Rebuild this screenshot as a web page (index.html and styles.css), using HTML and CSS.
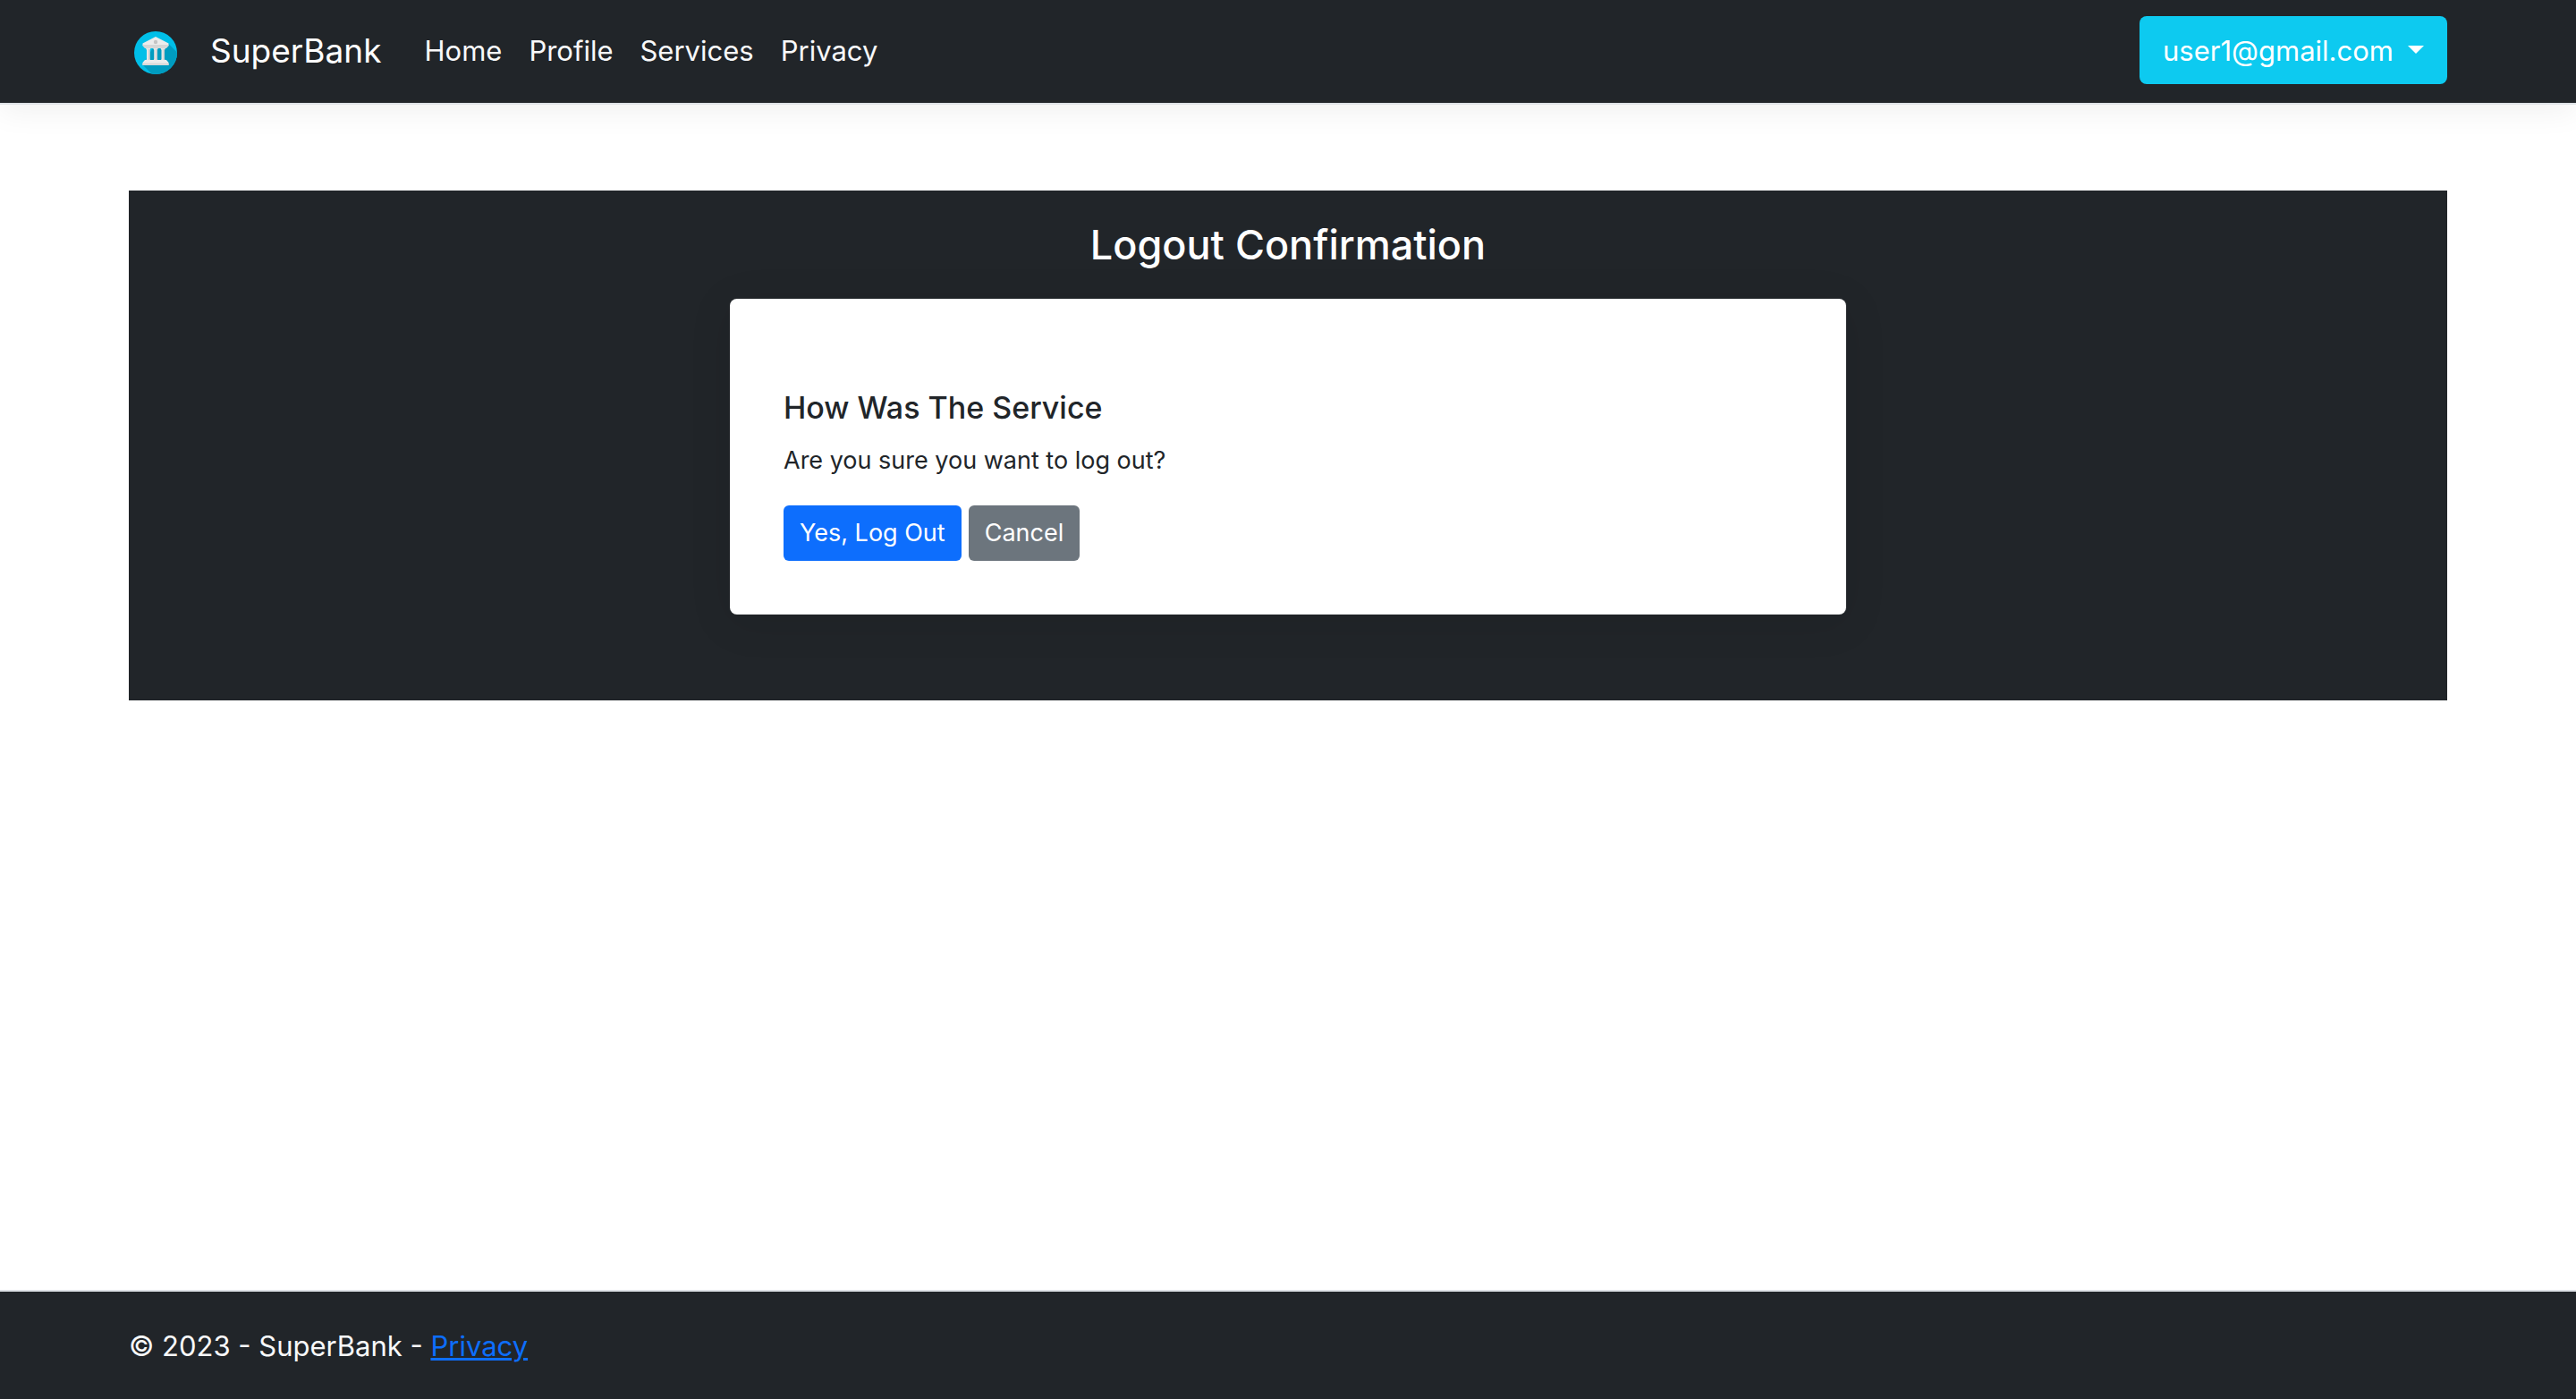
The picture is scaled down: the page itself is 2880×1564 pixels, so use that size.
FILE: index.html
```html
<!DOCTYPE html>
<html lang="en">
<head>
  <meta charset="utf-8">
  <meta name="viewport" content="width=device-width, initial-scale=1">
  <title>Logout Confirmation - SuperBank</title>
  <link rel="stylesheet" href="styles.css">
</head>
<body>
  <header class="navbar">
    <div class="container navbar-inner">
      <a class="brand" href="#">
        <svg class="brand-logo" viewBox="0 0 48 48" aria-hidden="true">
          <defs>
            <clipPath id="disc"><circle cx="24" cy="24" r="24"/></clipPath>
          </defs>
          <g clip-path="url(#disc)">
            <rect width="48" height="48" fill="#00bfe8"/>
            <path d="M38.500 14L60 35.500V60H32L9.500 37.500L20 20Z" fill="#009cc0"/>
          </g>
          <path d="M24 6L38.500 13.500V16L36 18.500H12L9.500 16V13.500Z" fill="#ececec"/>
          <path d="M9.500 15h29v1L36 19H12l-2.500-3z" fill="#d6d6d6"/>
          <circle cx="24" cy="12" r="2.200" fill="#c4c4c4"/>
          <path d="M13 19h5.500l-1 2v10l1 2H13l1-2V21zM21.250 19h5.500l-1 2v10l1 2h-5.500l1-2V21zM29.500 19H35l-1 2v10l1 2h-5.500l1-2V21z" fill="#e6e6e6"/>
          <path d="M16 20h1.500v12H16zM24.250 20h1.500v12h-1.500zM32.500 20H34v12h-1.500z" fill="#cfcfcf"/>
          <path d="M12 32h24l2.500 3v3h-29v-3z" fill="#ececec"/>
          <path d="M9.500 35.500h29V38h-29z" fill="#d9d9d9"/>
        </svg>
        <span>SuperBank</span>
      </a>
      <nav class="nav-links" aria-label="Main">
        <a href="#">Home</a>
        <a href="#">Profile</a>
        <a href="#">Services</a>
        <a href="#">Privacy</a>
      </nav>
      <button class="btn btn-info" type="button" aria-haspopup="true">user1@gmail.com<span class="caret"></span></button>
    </div>
  </header>

  <main class="container page">
    <section class="panel">
      <h1 class="panel-title">Logout Confirmation</h1>
      <div class="panel-column">
        <form class="card">
          <h2 class="card-title">How Was The Service</h2>
          <p class="card-text">Are you sure you want to log out?</p>
          <div class="actions">
            <button class="btn btn-primary" type="submit">Yes, Log Out</button>
            <a class="btn btn-secondary" href="#">Cancel</a>
          </div>
        </form>
      </div>
    </section>
  </main>

  <footer class="footer">
    <div class="container">© 2023 - SuperBank - <a href="#">Privacy</a></div>
  </footer>
</body>
</html>
```
FILE: styles.css
```css
* {
  box-sizing: border-box;
}

body {
  margin: 0;
  min-height: 100vh;
  display: flex;
  flex-direction: column;
  background: #fff;
  color: #212529;
  font-family: Inter, "Liberation Sans", sans-serif;
  font-size: 27px;
  line-height: 42px;
}

h1,
h2,
p {
  margin: 0;
}

.container {
  width: 90%;
  margin: 0 auto;
}

.navbar {
  background: #212529;
  border-bottom: 2px solid #dee2e6;
  box-shadow: 0 8px 32px rgba(0, 0, 0, 0.06);
}

.navbar-inner {
  display: flex;
  align-items: center;
  padding: 18px 0 21px;
}

.brand {
  display: flex;
  align-items: center;
  gap: 37px;
  margin-right: 48px;
  padding: 2px 0 0 6px;
  color: #fff;
  font-size: 37px;
  text-decoration: none;
}

.brand-logo {
  width: 48px;
  height: 48px;
  margin-top: 4px;
}

.nav-links {
  display: flex;
  gap: 30px;
  margin-right: auto;
  padding-top: 2px;
  font-size: 31px;
}

.nav-links a {
  color: #f8f9fa;
  text-decoration: none;
}

.btn {
  display: inline-flex;
  align-items: center;
  padding: 10px 18px;
  border: 0;
  border-radius: 6px;
  color: #fff;
  font: inherit;
  text-decoration: none;
  cursor: pointer;
}

.btn-info {
  padding: 18px 26px 16px;
  border-radius: 8px;
  background: #0dcaf0;
  font-size: 31px;
}

.btn-primary {
  background: #0d6efd;
}

.btn-secondary {
  background: #6c757d;
}

.caret {
  margin: 0 0 4px 16px;
  border-top: 9px solid;
  border-right: 9px solid transparent;
  border-left: 9px solid transparent;
}

.page {
  flex: 1;
  padding: 96px 0;
}

.panel {
  padding: 32px 0 96px;
  background: #212529;
}

.panel-title {
  margin-bottom: 31px;
  color: #fff;
  font-size: 45px;
  font-weight: 500;
  line-height: 58px;
  text-align: center;
}

.panel-column {
  width: 50%;
  margin: 0 auto;
  padding: 0 24px;
}

.card {
  padding: 100px 60px 60px;
  border-radius: 8px;
  background: #fff;
  box-shadow: 0 8px 48px rgba(0, 0, 0, 0.1);
}

.card-title {
  margin-bottom: 16px;
  font-size: 34px;
  font-weight: 500;
  line-height: 44px;
}

.card-text {
  margin-bottom: 29px;
}

.actions {
  display: flex;
  gap: 8px;
}

.footer {
  padding: 40px 0 38px;
  border-top: 2px solid #dee2e6;
  background: #212529;
  color: #f8f9fa;
  font-size: 31px;
}

.footer a {
  color: #0d6efd;
}
```
